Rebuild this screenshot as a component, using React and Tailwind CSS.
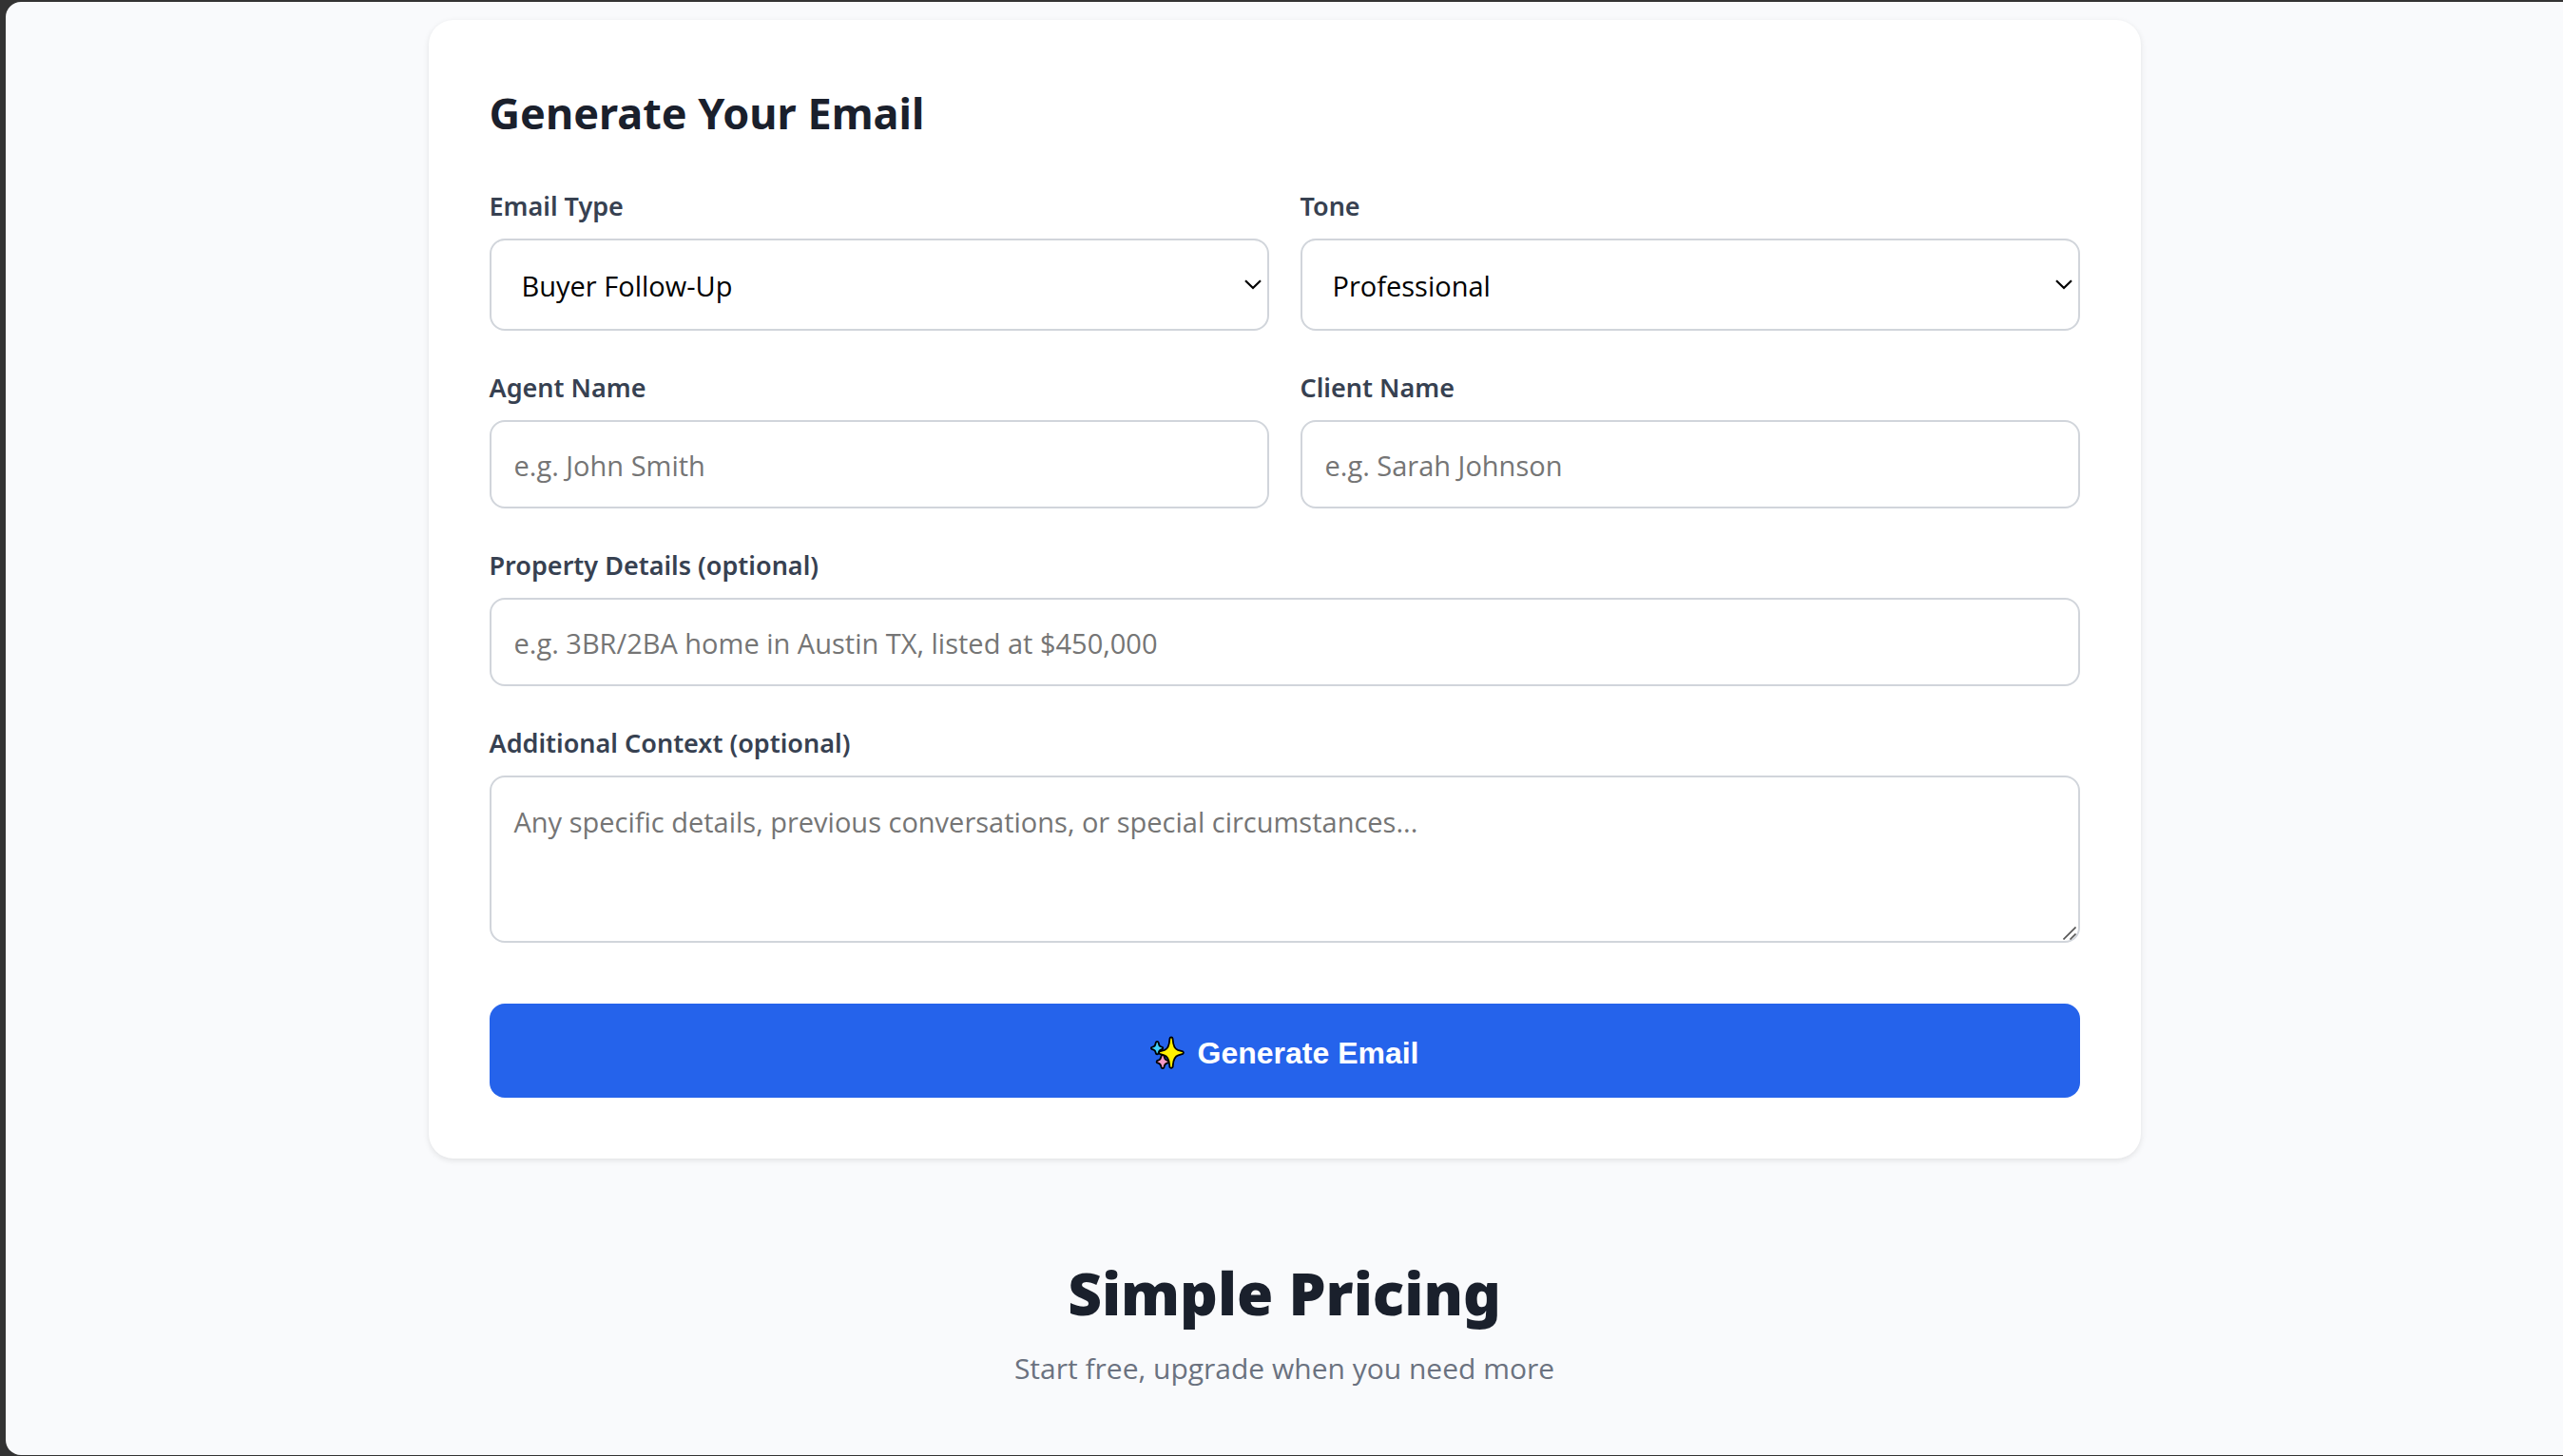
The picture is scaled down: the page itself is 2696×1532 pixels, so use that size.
import React, { useState } from 'react';
import clsx from 'clsx';

const EMAIL_TYPES = ['Buyer Follow-Up', 'Seller Follow-Up', 'New Listing', 'Open House Invite', 'Price Reduction'];
const TONES = ['Professional', 'Friendly', 'Casual', 'Urgent'];

const CONTROL = "w-full border-2 border-[#d1d5db] rounded-2xl bg-white font-['Open_Sans','Noto_Sans',sans-serif] text-[29px] leading-[40px] outline-none focus:border-[#2563eb] placeholder:text-[#757575]";

function Field({ id, label, className, children }) {
  return (
    <div className={clsx('flex flex-col', className)}>
      <label htmlFor={id} className="mb-3.5 text-[27px] leading-[40px] font-semibold text-[#374151]">{label}</label>
      {children}
    </div>
  );
}

function Select({ id, value, onChange, options }) {
  return (
    <div className="relative">
      <select
        id={id}
        value={value}
        onChange={(e) => onChange(e.target.value)}
        className={clsx(CONTROL, 'block h-[97px] appearance-none pt-0.5 pl-8 pr-12 text-black')}
      >
        {options.map(o => <option key={o} value={o}>{o}</option>)}
      </select>
      <svg viewBox="0 0 18 11" className="pointer-events-none absolute right-2 top-[43px] w-[18px] h-[11px]" fill="none" stroke="#000" strokeWidth="2.2">
        <path d="M1 1.2 L9 9 L17 1.2" />
      </svg>
    </div>
  );
}

function Sparkles() {
  return (
    <svg viewBox="0 0 36 36" className="w-9 h-9 shrink-0 overflow-visible" stroke="#000" strokeWidth="1.8" strokeLinejoin="round" aria-hidden="true">
      <path fill="#3fd0fb" d="M7.2 5.8 Q8.6 5.8 8.8 8 Q9.2 10.4 10.6 11 L13 12 Q13.6 13 12.8 13.8 L10.8 14.6 Q9.2 15.4 8.8 17.2 Q8.6 19.4 7.2 19.4 Q5.8 19.4 5.6 17.2 Q5.2 15.2 3.6 14.6 L1.4 13.8 Q0.4 13 1.4 12 L3.6 11.2 Q5.2 10.4 5.6 8 Q5.8 5.8 7.2 5.8 Z" />
      <path fill="#f79ac8" d="M13 19.8 Q14.5 19.8 14.7 22.2 Q15.2 24.6 17 25.4 L19 26.2 Q19.8 27.2 19 28.1 L17 28.9 Q15.2 29.7 14.7 31.8 Q14.5 34.2 13 34.2 Q11.5 34.2 11.3 31.8 Q10.8 29.7 9 28.9 L7 28.1 Q6.2 27.2 7 26.2 L9 25.4 Q10.8 24.6 11.3 22.2 Q11.5 19.8 13 19.8 Z" />
      <path fill="#fff100" d="M22 1.4 Q23.6 1.4 23.7 4 Q24.2 13 29 14.9 L34.2 16.3 Q35.6 17.6 34.2 18.9 L29.4 20.3 Q24.6 22 23.9 30 L23.6 32.8 Q22 35 20.4 32.8 L20.1 30 Q19.4 22 14.6 20.3 L9.8 18.9 Q8.4 17.6 9.8 16.3 L15 14.9 Q19.8 13 20.3 4 Q20.4 1.4 22 1.4 Z" />
    </svg>
  );
}

export default function App() {
  const [form, setForm] = useState({
    type: EMAIL_TYPES[0],
    tone: TONES[0],
    agent: '',
    client: '',
    property: '',
    context: ''
  });

  const update = (key) => (value) => setForm({ ...form, [key]: value });
  const handleInput = (key) => (e) => update(key)(e.target.value);

  return (
    <div className="flex min-h-screen flex-col bg-[#333333] pl-1.5 pt-0.5 pb-px font-['Noto_Sans','Open_Sans',sans-serif]">
      <main className="flex-1 rounded-l-2xl bg-[#f9fafc] px-8 pt-[19px] pb-10 text-[#1a202c]">
        <section className="mx-auto max-w-[1801px] rounded-[26px] bg-white p-16 shadow-[0_2px_6px_rgba(0,0,0,0.1)]">
          <h2 className="mb-11 text-[45px] leading-[68px] font-bold">Generate Your Email</h2>

          <form onSubmit={(e) => e.preventDefault()}>
            <div className="grid grid-cols-2 gap-x-[33px] gap-y-10">
              <Field id="type" label="Email Type">
                <Select id="type" value={form.type} onChange={update('type')} options={EMAIL_TYPES} />
              </Field>
              <Field id="tone" label="Tone">
                <Select id="tone" value={form.tone} onChange={update('tone')} options={TONES} />
              </Field>
              <Field id="agent" label="Agent Name">
                <input id="agent" type="text" value={form.agent} onChange={handleInput('agent')} placeholder="e.g. John Smith" className={clsx(CONTROL, 'h-[93px] px-6 pt-0.5')} />
              </Field>
              <Field id="client" label="Client Name">
                <input id="client" type="text" value={form.client} onChange={handleInput('client')} placeholder="e.g. Sarah Johnson" className={clsx(CONTROL, 'h-[93px] px-6 pt-0.5')} />
              </Field>
              <Field id="property" label="Property Details (optional)" className="col-span-2">
                <input id="property" type="text" value={form.property} onChange={handleInput('property')} placeholder="e.g. 3BR/2BA home in Austin TX, listed at $450,000" className={clsx(CONTROL, 'h-[93px] px-6 pt-0.5')} />
              </Field>
              <Field id="context" label="Additional Context (optional)" className="col-span-2">
                <div className="relative">
                  <textarea
                    id="context"
                    value={form.context}
                    onChange={handleInput('context')}
                    placeholder="Any specific details, previous conversations, or special circumstances..."
                    className={clsx(CONTROL, 'block h-44 resize-y px-6 py-[27px] [&::-webkit-resizer]:hidden')}
                  />
                  {/* Resize grip */}
                  <svg viewBox="0 0 14 14" className="pointer-events-none absolute right-1 bottom-[3px] w-3.5 h-3.5" stroke="#555" strokeWidth="1.6">
                    <path d="M0.5 13.5 L13.5 0.5 M7.5 13.5 L13.5 7.5" />
                  </svg>
                </div>
              </Field>
            </div>

            <button type="submit" className="mt-16 flex h-[99px] w-full items-center justify-center gap-3.5 rounded-2xl bg-[#2563eb] pt-1 font-['Liberation_Sans',Arial,sans-serif] text-[32px] leading-[40px] font-bold text-white hover:bg-[#1d4ed8]">
              <Sparkles />
              Generate Email
            </button>
          </form>
        </section>

        <section className="mt-24 text-center">
          <h2 className="text-[62px] leading-[90px] font-black">Simple Pricing</h2>
          <p className="mt-2.5 font-['Open_Sans','Noto_Sans',sans-serif] text-[30px] leading-[50px] text-[#6b7280]">Start free, upgrade when you need more</p>
        </section>
      </main>
    </div>
  );
}
